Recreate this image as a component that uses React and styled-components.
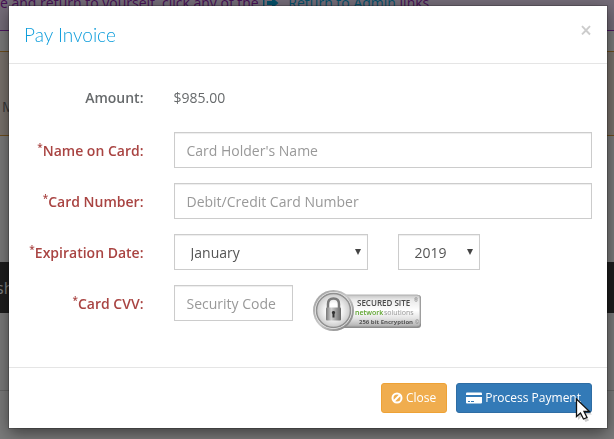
import React, { useState } from 'react';
import styled, { createGlobalStyle } from 'styled-components';

const GlobalStyle = createGlobalStyle`
  * {
    box-sizing: border-box;
  }

  body {
    margin: 0;
    overflow: hidden;
    font-family: 'Open Sans', sans-serif;
    font-size: 14px;
    line-height: 20px;
    color: #676a6c;
    background: #f5f5f5;
  }
`;

const Page = styled.div`
  display: flex;
  flex-direction: column;
  min-height: 100vh;
`;

const Notice = styled.div`
  display: flex;
  align-items: flex-end;
  height: 31px;
  padding-bottom: 17px;
  overflow: hidden;
  white-space: pre;
  color: #8e24aa;
  background: #e8d8f0;
  border-bottom: 1px solid #9b30c4;
`;

const NoticeLink = styled.a`
  display: flex;
  align-items: center;
  gap: 8px;
  color: #0a9fd0;
  text-decoration: none;
`;

const Warning = styled.div`
  display: flex;
  align-items: center;
  height: 85px;
  margin-top: 20px;
  padding: 26px 2px 0;
  background: #f2e4d8;
  border-top: 1px solid #d99a3c;
  border-bottom: 1px solid #d99a3c;
`;

const Band = styled.div`
  display: flex;
  align-items: center;
  height: 51px;
  margin-top: 126px;
  font-size: 16px;
  text-indent: -4px;
  color: #fff;
  background: #3c3c3c;
`;

const Rest = styled.div`
  flex: 1;
  margin-top: 77px;
  border-top: 1px solid #ccc;
`;

const Backdrop = styled.div`
  position: fixed;
  inset: 0;
  padding: 6px 7px 11px 9px;
  background: rgba(0, 0, 0, 0.5);
`;

const Dialog = styled.div`
  background: #fff;
  box-shadow: 0 5px 15px rgba(0, 0, 0, 0.5), 0 0 0 1px rgba(0, 0, 0, 0.2);
`;

const Header = styled.div`
  display: flex;
  justify-content: space-between;
  align-items: flex-start;
  padding: 15px;
  border-bottom: 1px solid #e5e5e5;
`;

const Title = styled.h4`
  margin: 0;
  font-family: Lato, sans-serif;
  font-size: 19px;
  font-weight: 300;
  line-height: 27px;
  color: #0d9ddb;
`;

const CloseIcon = styled.button`
  padding: 0;
  border: none;
  background: none;
  font-family: 'Open Sans', sans-serif;
  font-size: 21px;
  font-weight: 600;
  line-height: 18px;
  color: #ccc;
  cursor: pointer;
`;

const Body = styled.div`
  display: flex;
  flex-direction: column;
  gap: 15px;
  min-height: 303px;
  padding: 17px 0;
`;

const Row = styled.div`
  display: grid;
  grid-template-columns: 1fr 3fr;
  align-items: start;
  min-height: 36px;
`;

const Label = styled.label`
  padding: ${props => (props.$required ? '9px' : '7px')} 15px 0 0;
  text-align: right;
  font-weight: 600;
  white-space: nowrap;
  color: ${props => props.$required ? '#a94442' : '#676a6c'};

  sup {
    position: relative;
    top: -5px;
    font-size: 10px;
    line-height: 0;
    vertical-align: baseline;
  }
`;

const Field = styled.div`
  display: flex;
  gap: ${props => props.$gap || '0'};
  padding: 0 15px;
`;

const Amount = styled.span`
  padding-top: 7px;
`;

const Input = styled.input`
  width: ${props => props.$width || '100%'};
  height: 36px;
  padding: 6px 12px;
  border: 1px solid #ccc;
  border-radius: 0;
  background: #fff;
  box-shadow: inset 0 1px 1px rgba(0, 0, 0, 0.075);
  font-family: 'Open Sans', sans-serif;
  font-size: 14px;
  color: #555;
  outline: none;

  &::placeholder {
    color: #999;
    opacity: 1;
  }
`;

const SelectWrap = styled.div`
  position: relative;
  width: ${props => props.$width};

  svg {
    position: absolute;
    top: 15px;
    right: 7px;
    pointer-events: none;
  }
`;

const Select = styled.select`
  width: 100%;
  height: 36px;
  padding: 6px 16px;
  border: 1px solid #ccc;
  border-radius: 0;
  appearance: none;
  background: #fff;
  box-shadow: inset 0 1px 1px rgba(0, 0, 0, 0.075);
  font-family: 'Open Sans', sans-serif;
  font-size: 14px;
  color: #555;
`;

const SealIcon = styled.svg`
  flex: none;
  margin-top: 4px;
`;

const Footer = styled.div`
  display: flex;
  justify-content: flex-end;
  gap: 9px;
  padding: 15px;
  border-top: 1px solid #e5e5e5;
`;

const Button = styled.button`
  display: flex;
  align-items: center;
  gap: 3px;
  height: 30px;
  padding: 0 10px 0 9px;
  border: 1px solid ${props => props.$border};
  border-radius: 3px;
  background: ${props => props.$color};
  font-family: 'Open Sans', sans-serif;
  font-size: 12px;
  line-height: 18px;
  color: #fff;
  cursor: pointer;
`;

const Pointer = styled.svg`
  position: absolute;
  right: 19px;
  bottom: 15px;
  pointer-events: none;
`;

const SignOutIcon = () => (
  <svg width="18" height="14" viewBox="0 0 18 14" fill="currentColor">
    <path d="M5 1H3Q1 1 1 3v8q0 2 2 2h2v-1.500H3.500Q2.500 11.500 2.500 10.500v-7Q2.500 2.500 3.500 2.500H5z" />
    <path d="M5 5h5V1.500L16.500 7 10 12.500V9H5z" />
  </svg>
);

const BanIcon = () => (
  <svg width="12" height="12" viewBox="0 0 12 12" fill="none" stroke="currentColor" strokeWidth="2">
    <circle cx="6" cy="6" r="4.500" />
    <path d="M3 9L9 3" />
  </svg>
);

const CardIcon = () => (
  <svg width="16" height="12" viewBox="0 0 16 12" fill="currentColor">
    <path d="M1 .5h14q1 0 1 1V3H0V1.500Q0 .5 1 .5z" />
    <path fillRule="evenodd" d="M0 5h16V10.500q0 1-1 1H1q-1 0-1-1zM2 9v1h2V9zM5 9v1h3V9z" />
  </svg>
);

const Caret = () => (
  <svg width="6" height="6" viewBox="0 0 6 6">
    <path d="M0 0h6L3 6z" fill="#444" />
  </svg>
);

const Seal = () => (
  <SealIcon width="110" height="44" viewBox="0 0 110 44" role="img" aria-label="Secured site">
    <defs>
      <linearGradient id="plate" x1="0" y1="0" x2="0" y2="1">
        <stop offset="0" stopColor="#c4c4c4" />
        <stop offset="0.150" stopColor="#e9e9e9" />
        <stop offset="0.500" stopColor="#fff" />
        <stop offset="0.750" stopColor="#e4e4e4" />
        <stop offset="1" stopColor="#b4b4b4" />
      </linearGradient>
      <linearGradient id="ring" x1="0" y1="0" x2="1" y2="1">
        <stop offset="0" stopColor="#9a9a9a" />
        <stop offset="0.500" stopColor="#c8c8c8" />
        <stop offset="1" stopColor="#737373" />
      </linearGradient>
      <radialGradient id="disc">
        <stop offset="0.400" stopColor="#fff" />
        <stop offset="1" stopColor="#c9c9c9" />
      </radialGradient>
      <linearGradient id="lock" x1="0" y1="0" x2="1" y2="0">
        <stop offset="0" stopColor="#777" />
        <stop offset="0.350" stopColor="#cfcfcf" />
        <stop offset="1" stopColor="#686868" />
      </linearGradient>
    </defs>
    <rect x="20" y="6" width="88" height="33" rx="3" fill="#8d8d8d" />
    <rect x="20" y="6" width="87" height="31" rx="3" fill="url(#plate)" stroke="#b0b0b0" />
    <circle cx="20.500" cy="21.500" r="20.500" fill="url(#ring)" />
    <circle cx="20.500" cy="21.500" r="18.500" fill="#eee" />
    <circle cx="20.500" cy="21.500" r="17" fill="url(#disc)" stroke="#909090" strokeWidth="1.500" />
    <path d="M15 20v-5q0-5.500 5.500-5.500T26 15v5" fill="none" stroke="#7a7a7a" strokeWidth="2.500" />
    <rect x="13" y="18.500" width="15" height="13" rx="1" fill="url(#lock)" />
    <path d="M20.500 22a1.600 1.600 0 0 1 1 2.900V28.500h-2V24.900A1.600 1.600 0 0 1 20.500 22z" fill="#333" />
    <g fontFamily="Open Sans, sans-serif">
      <text x="44" y="17" fontSize="8" fontWeight="600" fill="#4a4a4a">SECURED SITE</text>
      <text x="42" y="26" fontSize="7" fontWeight="600" fill="#5fa52f">network</text>
      <text x="71" y="26" fontSize="7" fill="#999">solutions</text>
      <text x="46" y="35" fontSize="6" fontWeight="700" fill="#555">256 bit Encryption</text>
      <text x="101" y="13" fontSize="5" fill="#777">®</text>
      <text x="102" y="35" fontSize="5" fill="#777">©</text>
    </g>
  </SealIcon>
);

const App = () => {
  const [month, setMonth] = useState('January');
  const [year, setYear] = useState('2019');

  return (
    <>
      <GlobalStyle />
      <Page>
        <Notice>
          {'e and return to yourself, click any of the '}
          <NoticeLink href="#"><SignOutIcon />Return to Admin</NoticeLink>
          {' links.'}
        </Notice>
        <Warning>M</Warning>
        <Band>sh</Band>
        <Rest />
      </Page>

      <Backdrop>
        <Dialog role="dialog" aria-labelledby="pay-title">
          <Header>
            <Title id="pay-title">Pay Invoice</Title>
            <CloseIcon type="button" aria-label="Dismiss">×</CloseIcon>
          </Header>

          <Body>
            <Row>
              <Label as="span">Amount:</Label>
              <Field><Amount>$985.00</Amount></Field>
            </Row>
            <Row>
              <Label $required htmlFor="name"><sup>*</sup>Name on Card:</Label>
              <Field><Input id="name" placeholder="Card Holder's Name" /></Field>
            </Row>
            <Row>
              <Label $required htmlFor="number"><sup>*</sup>Card Number:</Label>
              <Field><Input id="number" placeholder="Debit/Credit Card Number" /></Field>
            </Row>
            <Row>
              <Label $required htmlFor="month"><sup>*</sup>Expiration Date:</Label>
              <Field $gap="30px">
                <SelectWrap $width="194px">
                  <Select id="month" value={month} onChange={e => setMonth(e.target.value)}>
                    <option>January</option>
                    <option>February</option>
                    <option>March</option>
                  </Select>
                  <Caret />
                </SelectWrap>
                <SelectWrap $width="82px">
                  <Select aria-label="Expiration year" value={year} onChange={e => setYear(e.target.value)}>
                    <option>2019</option>
                    <option>2020</option>
                    <option>2021</option>
                  </Select>
                  <Caret />
                </SelectWrap>
              </Field>
            </Row>
            <Row>
              <Label $required htmlFor="cvv"><sup>*</sup>Card CVV:</Label>
              <Field $gap="20px">
                <Input id="cvv" $width="119px" placeholder="Security Code" />
                <Seal />
              </Field>
            </Row>
          </Body>

          <Footer>
            <Button type="button" $color="#f0ad4e" $border="#eea236">
              <BanIcon />Close
            </Button>
            <Button type="button" $color="#337ab7" $border="#2e6da4">
              <CardIcon />Process Payment
            </Button>
          </Footer>
        </Dialog>
        <Pointer width="20" height="26" viewBox="0 0 20 26">
          <path d="M3 3v19l4.500-4 3 6 3.500-1.500-3-6h6z" fill="#000" opacity="0.200" />
          <path d="M1.500 1v17.500l4-3.500 3 6 3.500-1.500-3-6h5.500z" fill="#fff" stroke="#111" strokeWidth="1.300" />
        </Pointer>
      </Backdrop>
    </>
  );
};

export default App;
